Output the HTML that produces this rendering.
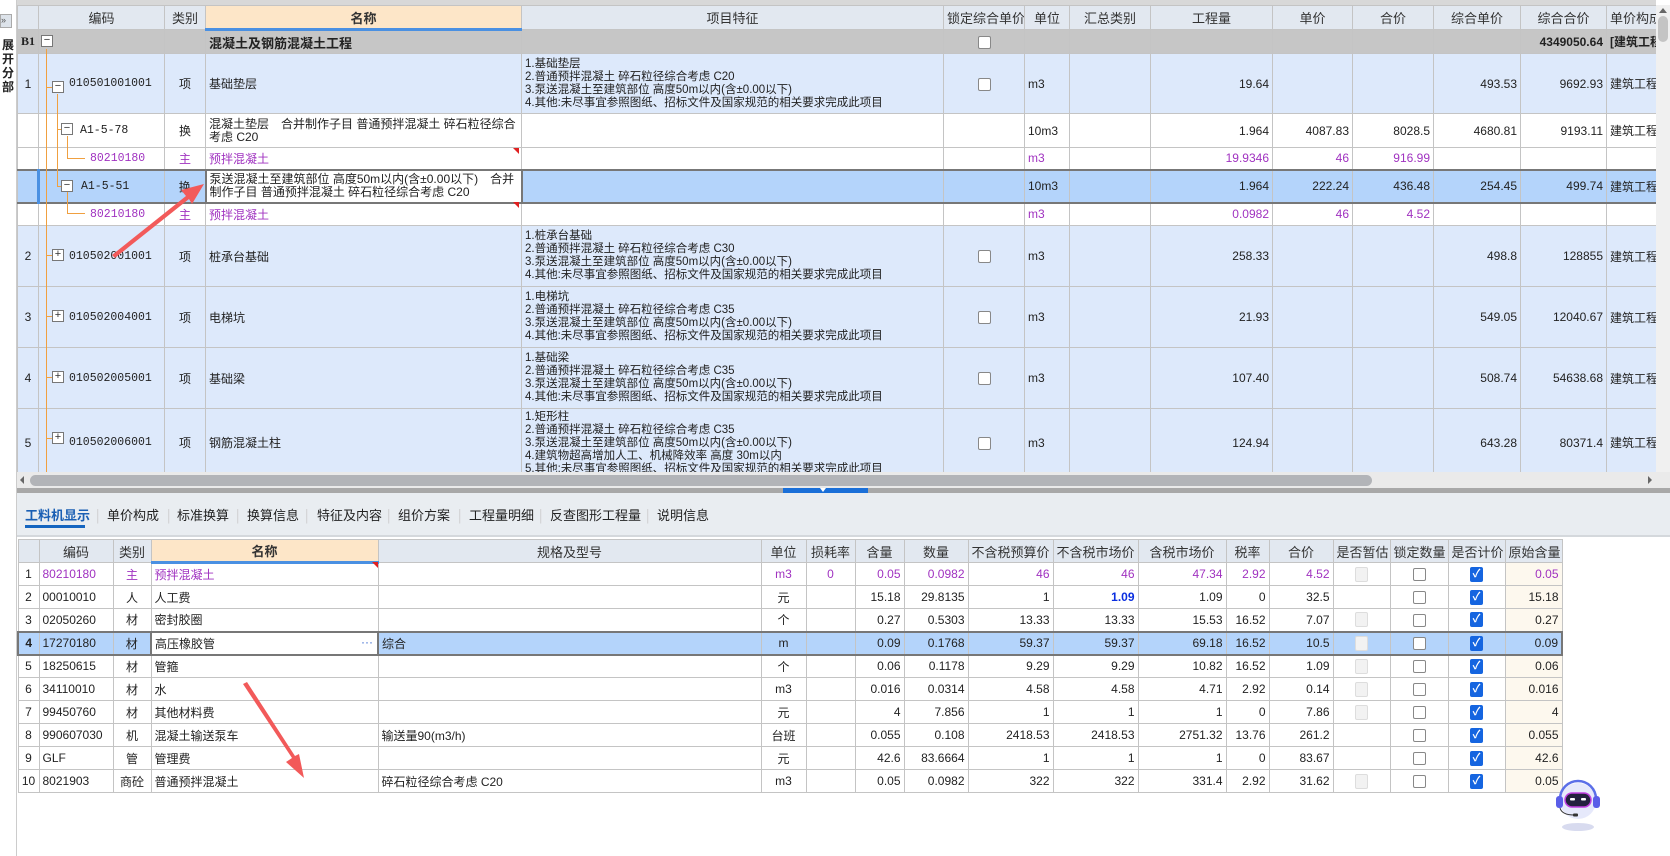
<!DOCTYPE html>
<html><head><meta charset="utf-8">
<style>
*{box-sizing:border-box;margin:0;padding:0}
body{width:1670px;height:856px;overflow:hidden;background:#fff;font-family:"Liberation Sans","Noto Sans CJK SC",sans-serif;font-size:12px;color:#222;position:relative}
table{border-collapse:collapse;table-layout:fixed;position:absolute}
td,th{border:1px solid #c4c4c4;overflow:hidden;white-space:nowrap;padding:0 3px;font-weight:normal}
th{background:#e2e8f0;font-size:13px;color:#333;text-align:center}
th.nm{background:#fde6c8;font-weight:bold;border-bottom:3px solid #4a90e2}
.r{text-align:right}.c{text-align:center}
.p{color:#a032c0}
.code{font-family:"Liberation Mono",monospace;font-size:11.5px}
.feat{white-space:pre;line-height:13px;font-size:11.5px;vertical-align:middle}
.b1 td{background:#c6c6c6;font-weight:bold}
.q td{background:#dde9fb}
.sel td{background:#b4d4fb;border-top:2px solid #777;border-bottom:2px solid #777}
.cb{display:inline-block;width:13px;height:13px;border:1px solid #888;border-radius:2px;background:#fff;vertical-align:middle}
.cbd{display:inline-block;width:13px;height:15px;border:1px solid #ddd;border-radius:2px;background:#f2f2f2;vertical-align:middle}
.cbk{display:inline-block;width:13px;height:15px;border-radius:2px;background:#1565e0;color:#fff;font-size:11px;line-height:15px;text-align:center;vertical-align:middle;font-weight:bold}
.cr td.oc{background:#fdf8ee}
.abs{position:absolute}
.box{position:absolute;width:12px;height:12px;border:1px solid #777;background:#fff;font-size:11px;line-height:9px;text-align:center;color:#333}
.ol{position:absolute;background:#f0a040}
</style></head><body>

<div class="abs" style="left:0;top:0;width:17px;height:472px;background:#fff;border-right:1px solid #ccc"></div>
<div class="abs" style="left:0;top:14px;width:12px;height:14px;background:#dde3ea;border:1px solid #aaa;font-size:9px;line-height:11px;color:#555">»</div>
<div class="abs" style="left:2px;top:38px;width:12px;font-size:12px;font-weight:bold;line-height:14px;font-family:'Noto Sans CJK SC',sans-serif">展<br>开<br>分<br>部</div>
<div class="abs" style="left:16px;top:472px;width:1px;height:384px;background:#ccc"></div>
<div class="abs" style="left:17px;top:0;width:1639px;height:5px;background:#d8d8d8"></div>

<table style="left:17px;top:5px;width:1639px">
<colgroup><col style="width:21px"><col style="width:126px"><col style="width:41px"><col style="width:316px"><col style="width:422px"><col style="width:81px"><col style="width:45px"><col style="width:81px"><col style="width:122px"><col style="width:80px"><col style="width:81px"><col style="width:87px"><col style="width:86px"><col style="width:50px"></colgroup>
<tr style="height:24px"><th></th><th>编码</th><th>类别</th><th class="nm">名称</th><th>项目特征</th><th>锁定综合单价</th><th>单位</th><th>汇总类别</th><th>工程量</th><th>单价</th><th>合价</th><th>综合单价</th><th>综合合价</th><th>单价构成</th></tr>
<tr class="b1" style="height:24px"><td class="c" style="font-family:'Liberation Serif',serif">B1</td><td></td><td></td><td style="font-size:13px">混凝土及钢筋混凝土工程</td><td></td><td class="c"><span class="cb"></span></td><td></td><td></td><td></td><td></td><td></td><td></td><td class="r">4349050.64</td><td>[建筑工程</td></tr>
<tr class="q" style="height:60px"><td class="c">1</td><td class="code" style="padding-left:30px">010501001001</td><td class="c">项</td><td>基础垫层</td><td class="feat">1.基础垫层
2.普通预拌混凝土 碎石粒径综合考虑 C20
3.泵送混凝土至建筑部位 高度50m以内(含±0.00以下)
4.其他:未尽事宜参照图纸、招标文件及国家规范的相关要求完成此项目</td><td class="c"><span class="cb"></span></td><td>m3</td><td></td><td class="r">19.64</td><td></td><td></td><td class="r">493.53</td><td class="r">9692.93</td><td>建筑工程</td></tr>
<tr style="height:34px"><td></td><td class="code" style="padding-left:41px">A1-5-78</td><td class="c">换</td><td style="white-space:normal;line-height:13px">混凝土垫层　合并制作子目 普通预拌混凝土 碎石粒径综合考虑 C20</td><td></td><td></td><td>10m3</td><td></td><td class="r">1.964</td><td class="r">4087.83</td><td class="r">8028.5</td><td class="r">4680.81</td><td class="r">9193.11</td><td>建筑工程</td></tr>
<tr style="height:22px" class="p"><td></td><td class="p code" style="padding-left:51px">80210180</td><td class="c p">主</td><td class="p">预拌混凝土</td><td></td><td></td><td class="p">m3</td><td></td><td class="r p">19.9346</td><td class="r p">46</td><td class="r p">916.99</td><td></td><td></td><td></td></tr>
<tr class="sel" style="height:33px"><td style="border-right:3px solid #4a90e2"></td><td class="code" style="padding-left:41px">A1-5-51</td><td class="c">换</td><td style="background:#fff;border:2px solid #777;white-space:normal;line-height:13px">泵送混凝土至建筑部位 高度50m以内(含±0.00以下)　合并制作子目 普通预拌混凝土 碎石粒径综合考虑 C20</td><td></td><td></td><td>10m3</td><td></td><td class="r">1.964</td><td class="r">222.24</td><td class="r">436.48</td><td class="r">254.45</td><td class="r">499.74</td><td>建筑工程</td></tr>
<tr style="height:23px"><td></td><td class="p code" style="padding-left:51px">80210180</td><td class="c p">主</td><td class="p">预拌混凝土</td><td></td><td></td><td class="p">m3</td><td></td><td class="r p">0.0982</td><td class="r p">46</td><td class="r p">4.52</td><td></td><td></td><td></td></tr>
<tr class="q" style="height:61px"><td class="c">2</td><td class="code" style="padding-left:30px">010502001001</td><td class="c">项</td><td>桩承台基础</td><td class="feat">1.桩承台基础
2.普通预拌混凝土 碎石粒径综合考虑 C30
3.泵送混凝土至建筑部位 高度50m以内(含±0.00以下)
4.其他:未尽事宜参照图纸、招标文件及国家规范的相关要求完成此项目</td><td class="c"><span class="cb"></span></td><td>m3</td><td></td><td class="r">258.33</td><td></td><td></td><td class="r">498.8</td><td class="r">128855</td><td>建筑工程</td></tr>
<tr class="q" style="height:61px"><td class="c">3</td><td class="code" style="padding-left:30px">010502004001</td><td class="c">项</td><td>电梯坑</td><td class="feat">1.电梯坑
2.普通预拌混凝土 碎石粒径综合考虑 C35
3.泵送混凝土至建筑部位 高度50m以内(含±0.00以下)
4.其他:未尽事宜参照图纸、招标文件及国家规范的相关要求完成此项目</td><td class="c"><span class="cb"></span></td><td>m3</td><td></td><td class="r">21.93</td><td></td><td></td><td class="r">549.05</td><td class="r">12040.67</td><td>建筑工程</td></tr>
<tr class="q" style="height:61px"><td class="c">4</td><td class="code" style="padding-left:30px">010502005001</td><td class="c">项</td><td>基础梁</td><td class="feat">1.基础梁
2.普通预拌混凝土 碎石粒径综合考虑 C35
3.泵送混凝土至建筑部位 高度50m以内(含±0.00以下)
4.其他:未尽事宜参照图纸、招标文件及国家规范的相关要求完成此项目</td><td class="c"><span class="cb"></span></td><td>m3</td><td></td><td class="r">107.40</td><td></td><td></td><td class="r">508.74</td><td class="r">54638.68</td><td>建筑工程</td></tr>
<tr class="q" style="height:66px"><td class="c">5</td><td class="code" style="padding-left:30px">010502006001</td><td class="c">项</td><td>钢筋混凝土柱</td><td class="feat" style="vertical-align:top;padding-top:2px">1.矩形柱
2.普通预拌混凝土 碎石粒径综合考虑 C35
3.泵送混凝土至建筑部位 高度50m以内(含±0.00以下)
4.建筑物超高增加人工、机械降效率 高度 30m以内
5.其他:未尽事宜参照图纸、招标文件及国家规范的相关要求完成此项目</td><td class="c"><span class="cb"></span></td><td>m3</td><td></td><td class="r">124.94</td><td></td><td></td><td class="r">643.28</td><td class="r">80371.4</td><td>建筑工程</td></tr>
</table>

<div class="ol" style="left:46px;top:49px;width:1px;height:423px"></div>
<div class="ol" style="left:46px;top:87px;width:7px;height:1px"></div>
<div class="ol" style="left:57px;top:94px;width:1px;height:92px"></div>
<div class="ol" style="left:57px;top:129px;width:5px;height:1px"></div>
<div class="ol" style="left:57px;top:186px;width:5px;height:1px"></div>
<div class="ol" style="left:67px;top:136px;width:1px;height:23px"></div>
<div class="ol" style="left:67px;top:158px;width:18px;height:1px"></div>
<div class="ol" style="left:67px;top:192px;width:1px;height:22px"></div>
<div class="ol" style="left:67px;top:213px;width:18px;height:1px"></div>
<div class="ol" style="left:46px;top:255px;width:7px;height:1px"></div>
<div class="ol" style="left:46px;top:316px;width:7px;height:1px"></div>
<div class="ol" style="left:46px;top:377px;width:7px;height:1px"></div>
<div class="ol" style="left:46px;top:438px;width:7px;height:1px"></div>
<div class="box" style="left:41px;top:35px">−</div>
<div class="box" style="left:52px;top:81px">−</div>
<div class="box" style="left:61px;top:123px">−</div>
<div class="box" style="left:61px;top:180px">−</div>
<div class="box" style="left:52px;top:249px">+</div>
<div class="box" style="left:52px;top:310px">+</div>
<div class="box" style="left:52px;top:371px">+</div>
<div class="box" style="left:52px;top:432px">+</div>
<div class="abs" style="left:513px;top:148px;border-top:6px solid #e02020;border-left:6px solid transparent"></div>
<div class="abs" style="left:513px;top:202px;border-top:6px solid #e02020;border-left:6px solid transparent"></div>

<div class="abs" style="left:1656px;top:5px;width:14px;height:467px;background:#f0f0f0"></div>
<div class="abs" style="left:1659px;top:8px;border-bottom:5px solid #666;border-left:4px solid transparent;border-right:4px solid transparent"></div>
<div class="abs" style="left:1658px;top:16px;width:10px;height:26px;background:#c4c4c4;border-radius:5px"></div>

<div class="abs" style="left:17px;top:472px;width:1653px;height:16px;background:#eaeaea"></div>
<div class="abs" style="left:20px;top:476px;border-right:4px solid #666;border-top:4px solid transparent;border-bottom:4px solid transparent"></div>
<div class="abs" style="left:30px;top:475px;width:1342px;height:11px;background:#b2b4b8;border-radius:6px"></div>
<div class="abs" style="left:1648px;top:476px;border-left:4px solid #666;border-top:4px solid transparent;border-bottom:4px solid transparent"></div>
<div class="abs" style="left:17px;top:488px;width:1653px;height:5px;background:#a8a8a8"></div>
<div class="abs" style="left:783px;top:488px;width:85px;height:5px;background:#1a6fd8"></div>
<div class="abs" style="left:820px;top:488px;border-top:4px solid #fff;border-left:3px solid transparent;border-right:3px solid transparent"></div>

<div class="abs" style="left:17px;top:493px;width:1653px;height:44px;background:#e9edf1;border-bottom:2px solid #d4d8dc"></div>
<div class="abs" style="top:505px;left:0;font-size:13px;font-family:'Noto Sans CJK SC',sans-serif;color:#222;width:800px;height:20px">
<span class="abs" style="left:25px;color:#1a5fb4;font-weight:bold">工料机显示</span>
<span class="abs" style="left:96px;color:#ccc">|</span><span class="abs" style="left:107px">单价构成</span>
<span class="abs" style="left:167px;color:#ccc">|</span><span class="abs" style="left:177px">标准换算</span>
<span class="abs" style="left:236px;color:#ccc">|</span><span class="abs" style="left:247px">换算信息</span>
<span class="abs" style="left:305px;color:#ccc">|</span><span class="abs" style="left:317px">特征及内容</span>
<span class="abs" style="left:387px;color:#ccc">|</span><span class="abs" style="left:398px">组价方案</span>
<span class="abs" style="left:458px;color:#ccc">|</span><span class="abs" style="left:469px">工程量明细</span>
<span class="abs" style="left:539px;color:#ccc">|</span><span class="abs" style="left:550px">反查图形工程量</span>
<span class="abs" style="left:646px;color:#ccc">|</span><span class="abs" style="left:657px">说明信息</span>
</div>
<div class="abs" style="left:25px;top:525px;width:60px;height:3px;background:#1565c0"></div>

<table class="cr" style="left:17px;top:539px;width:1544px">
<colgroup><col style="width:21px"><col style="width:74px"><col style="width:38px"><col style="width:227px"><col style="width:383px"><col style="width:45px"><col style="width:49px"><col style="width:49px"><col style="width:64px"><col style="width:85px"><col style="width:85px"><col style="width:88px"><col style="width:43px"><col style="width:64px"><col style="width:57px"><col style="width:58px"><col style="width:57px"><col style="width:57px"></colgroup>
<tr style="height:23px"><th></th><th>编码</th><th>类别</th><th class="nm">名称</th><th>规格及型号</th><th>单位</th><th>损耗率</th><th>含量</th><th>数量</th><th>不含税预算价</th><th>不含税市场价</th><th>含税市场价</th><th>税率</th><th>合价</th><th>是否暂估</th><th>锁定数量</th><th>是否计价</th><th>原始含量</th></tr>
<tr style="height:23px"><td class="c">1</td><td class="p">80210180</td><td class="c p">主</td><td class="p">预拌混凝土</td><td></td><td class="c p">m3</td><td class="c p">0</td><td class="r p">0.05</td><td class="r p">0.0982</td><td class="r p">46</td><td class="r p">46</td><td class="r p">47.34</td><td class="r p">2.92</td><td class="r p">4.52</td><td class="c"><span class="cbd"></span></td><td class="c"><span class="cb"></span></td><td class="c"><span class="cbk">✓</span></td><td class="r p oc">0.05</td></tr>
<tr style="height:23px"><td class="c">2</td><td>00010010</td><td class="c">人</td><td>人工费</td><td></td><td class="c">元</td><td></td><td class="r">15.18</td><td class="r">29.8135</td><td class="r">1</td><td class="r" style="color:#0a2ee0;font-weight:bold">1.09</td><td class="r">1.09</td><td class="r">0</td><td class="r">32.5</td><td></td><td class="c"><span class="cb"></span></td><td class="c"><span class="cbk">✓</span></td><td class="r oc">15.18</td></tr>
<tr style="height:23px"><td class="c">3</td><td>02050260</td><td class="c">材</td><td>密封胶圈</td><td></td><td class="c">个</td><td></td><td class="r">0.27</td><td class="r">0.5303</td><td class="r">13.33</td><td class="r">13.33</td><td class="r">15.53</td><td class="r">16.52</td><td class="r">7.07</td><td class="c"><span class="cbd"></span></td><td class="c"><span class="cb"></span></td><td class="c"><span class="cbk">✓</span></td><td class="r oc">0.27</td></tr>
<tr class="sel" style="height:23px"><td class="c" style="font-weight:bold;border-left:2px solid #777">4</td><td>17270180</td><td class="c">材</td><td style="background:#fff;border:2px solid #777;position:relative">高压橡胶管<span style="position:absolute;right:4px;color:#3a6ad0">···</span></td><td>综合</td><td class="c">m</td><td></td><td class="r">0.09</td><td class="r">0.1768</td><td class="r">59.37</td><td class="r">59.37</td><td class="r">69.18</td><td class="r">16.52</td><td class="r">10.5</td><td class="c"><span class="cbd"></span></td><td class="c"><span class="cb"></span></td><td class="c"><span class="cbk">✓</span></td><td class="r" style="border-right:2px solid #777">0.09</td></tr>
<tr style="height:23px"><td class="c">5</td><td>18250615</td><td class="c">材</td><td>管箍</td><td></td><td class="c">个</td><td></td><td class="r">0.06</td><td class="r">0.1178</td><td class="r">9.29</td><td class="r">9.29</td><td class="r">10.82</td><td class="r">16.52</td><td class="r">1.09</td><td class="c"><span class="cbd"></span></td><td class="c"><span class="cb"></span></td><td class="c"><span class="cbk">✓</span></td><td class="r oc">0.06</td></tr>
<tr style="height:23px"><td class="c">6</td><td>34110010</td><td class="c">材</td><td>水</td><td></td><td class="c">m3</td><td></td><td class="r">0.016</td><td class="r">0.0314</td><td class="r">4.58</td><td class="r">4.58</td><td class="r">4.71</td><td class="r">2.92</td><td class="r">0.14</td><td class="c"><span class="cbd"></span></td><td class="c"><span class="cb"></span></td><td class="c"><span class="cbk">✓</span></td><td class="r oc">0.016</td></tr>
<tr style="height:23px"><td class="c">7</td><td>99450760</td><td class="c">材</td><td>其他材料费</td><td></td><td class="c">元</td><td></td><td class="r">4</td><td class="r">7.856</td><td class="r">1</td><td class="r">1</td><td class="r">1</td><td class="r">0</td><td class="r">7.86</td><td class="c"><span class="cbd"></span></td><td class="c"><span class="cb"></span></td><td class="c"><span class="cbk">✓</span></td><td class="r oc">4</td></tr>
<tr style="height:23px"><td class="c">8</td><td>990607030</td><td class="c">机</td><td>混凝土输送泵车</td><td>输送量90(m3/h)</td><td class="c">台班</td><td></td><td class="r">0.055</td><td class="r">0.108</td><td class="r">2418.53</td><td class="r">2418.53</td><td class="r">2751.32</td><td class="r">13.76</td><td class="r">261.2</td><td></td><td class="c"><span class="cb"></span></td><td class="c"><span class="cbk">✓</span></td><td class="r oc">0.055</td></tr>
<tr style="height:23px"><td class="c">9</td><td>GLF</td><td class="c">管</td><td>管理费</td><td></td><td class="c">元</td><td></td><td class="r">42.6</td><td class="r">83.6664</td><td class="r">1</td><td class="r">1</td><td class="r">1</td><td class="r">0</td><td class="r">83.67</td><td></td><td class="c"><span class="cb"></span></td><td class="c"><span class="cbk">✓</span></td><td class="r oc">42.6</td></tr>
<tr style="height:23px"><td class="c">10</td><td>8021903</td><td class="c">商砼</td><td>普通预拌混凝土</td><td>碎石粒径综合考虑 C20</td><td class="c">m3</td><td></td><td class="r">0.05</td><td class="r">0.0982</td><td class="r">322</td><td class="r">322</td><td class="r">331.4</td><td class="r">2.92</td><td class="r">31.62</td><td class="c"><span class="cbd"></span></td><td class="c"><span class="cb"></span></td><td class="c"><span class="cbk">✓</span></td><td class="r oc">0.05</td></tr>
</table>
<div class="abs" style="left:372px;top:562px;border-top:6px solid #e02020;border-left:6px solid transparent"></div>

<svg class="abs" style="left:0;top:0" width="1670" height="856">
<g fill="#f25a5a" stroke="none">
<path d="M112,255 L186,196 L181,190 L204,184 L192,204 L189,199 L115,258 Z"/>
<path d="M243,684 L292,758 L286,762 L304,778 L299,754 L295,756 L247,682 Z"/>
</g>
</svg>

<svg class="abs" style="left:1550px;top:775px" width="56" height="60" viewBox="0 0 56 60">
<ellipse cx="28" cy="52" rx="16" ry="4" fill="#c8cce8" opacity="0.7"/>
<circle cx="28" cy="26" r="18" fill="#e6e9fb"/>
<path d="M10,24 A18,18 0 0 1 46,24" fill="none" stroke="#5b6fe8" stroke-width="2.5"/>
<rect x="6" y="21" width="7" height="12" rx="3" fill="#5a5ee8"/>
<rect x="43" y="21" width="7" height="12" rx="3" fill="#5a5ee8"/>
<rect x="15" y="18" width="26" height="14" rx="7" fill="#24213e" stroke="#c040e0" stroke-width="1.5"/>
<rect x="20" y="23" width="5" height="2.5" rx="1" fill="#fff"/>
<rect x="31" y="23" width="5" height="2.5" rx="1" fill="#fff"/>
<path d="M10,33 Q12,40 24,40" fill="none" stroke="#333" stroke-width="1"/>
<rect x="23" y="38.5" width="5" height="3" rx="1" fill="#333"/>
</svg>
</body></html>
